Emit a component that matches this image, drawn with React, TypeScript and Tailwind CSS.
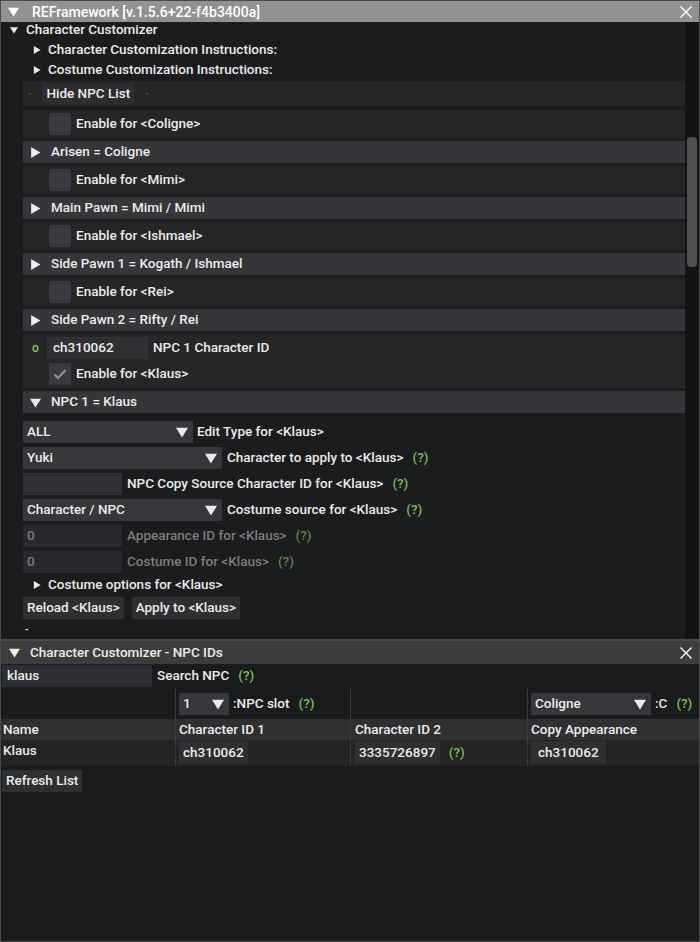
import React from "react";

// small filled triangles used by ImGui style trees / headers
const Down = ({ s = 11 }: { s?: number }) => (
  <svg width={s} height={s} viewBox="0 0 10 10" className="shrink-0">
    <path d="M0 1.5h10L5 9.5z" fill="currentColor" />
  </svg>
);

const Right = ({ s = 11 }: { s?: number }) => (
  <svg width={s} height={s} viewBox="0 0 10 10" className="shrink-0">
    <path d="M1 0v10l8.5-5z" fill="currentColor" />
  </svg>
);

const Close = () => (
  <svg width="14" height="14" viewBox="0 0 14 14" className="shrink-0">
    <path d="M1.5 1.5l11 11M12.5 1.5l-11 11" stroke="#fff" strokeWidth="1.4" />
  </svg>
);

const Help = ({ dim = false }: { dim?: boolean }) => (
  <span className={dim ? "ml-[9px] text-[#5f8447]" : "ml-[9px] text-[#7fbf4f]"}>(?)</span>
);

const Checkbox = ({ checked = false }: { checked?: boolean }) => (
  <div className="w-[22px] h-[22px] bg-[#393941] flex items-center justify-center shrink-0">
    {checked && (
      <svg width="16" height="16" viewBox="0 0 16 16">
        <path d="M2.5 8.5l3.5 3.5 7.5-8" stroke="#8d8d8f" strokeWidth="2.4" fill="none" />
      </svg>
    )}
  </div>
);

const EnableRow = ({ name }: { name: string }) => (
  <div className="h-[28px] bg-[#262626] flex items-center pl-[26px]">
    <Checkbox />
    <span className="ml-[5px]">Enable for &lt;{name}&gt;</span>
  </div>
);

const Header = ({ label, open = false }: { label: string; open?: boolean }) => (
  <div className="h-[22px] bg-[#353639] flex items-center pl-[7px]">
    {open ? <Down s={11} /> : <Right s={11} />}
    <span className="ml-[10px]">{label}</span>
  </div>
);

const Combo = ({ value, w }: { value: string; w: string }) => (
  <div className={`${w} h-[22px] bg-[#36373b] flex items-center pl-[4px] pr-[5px] shrink-0`}>
    <span>{value}</span>
    <span className="ml-auto"><Down s={12} /></span>
  </div>
);

export default function App() {
  return (
    <div className="w-[700px] h-[942px] flex flex-col bg-[#1a1b1d] text-[13.5px] font-medium leading-none text-[#ebebeb] font-['Roboto',sans-serif]">
      {/* main window */}
      <div className="h-[640px] flex flex-col border border-[#4b4b4c] bg-[#1b1c1e]">
        <div className="h-[21px] bg-[#929292] flex items-center pl-[7px] pr-[6px] text-white shrink-0">
          <Down s={11} />
          <span className="ml-[13px] text-[14px]">REFramework [v.1.5.6+22-f4b3400a]</span>
          <span className="ml-auto"><Close /></span>
        </div>

        <div className="flex flex-1 min-h-0">
          <div className="flex-1 flex flex-col">
            {/* tree */}
            <div className="h-[16px] flex items-center pl-[9px]">
              <Down s={8} />
              <span className="ml-[8px]">Character Customizer</span>
            </div>
            <div className="h-[16px] flex items-center pl-[32px] mt-[4px]">
              <Right s={8} />
              <span className="ml-[7px]">Character Customization Instructions:</span>
            </div>
            <div className="h-[16px] flex items-center pl-[32px] mt-[4px]">
              <Right s={8} />
              <span className="ml-[7px]">Costume Customization Instructions:</span>
            </div>

            <div className="ml-[22px] mt-[3px] flex flex-col gap-[3px]">
              <div className="h-[25px] bg-[#262626] flex items-center pl-[5px]">
                <span className="text-[#5a5a5a] text-[10px]">-</span>
                <div className="ml-[11px] h-[22px] bg-[#2d2d2f] flex items-center px-[4px]">Hide NPC List</div>
                <span className="ml-[11px] text-[#5a5a5a] text-[10px]">-</span>
              </div>
              <div className="mt-[1px]">
                <EnableRow name="Coligne" />
              </div>
              <Header label="Arisen = Coligne" />
              <EnableRow name="Mimi" />
              <Header label="Main Pawn = Mimi / Mimi" />
              <EnableRow name="Ishmael" />
              <Header label="Side Pawn 1 = Kogath / Ishmael" />
              <EnableRow name="Rei" />
              <Header label="Side Pawn 2 = Rifty / Rei" />
              <div className="h-[54px] bg-[#262626] flex flex-col pt-[3px] gap-[4px]">
                <div className="h-[22px] flex items-center pl-[9px]">
                  <span className="text-[#8fc454] text-[12px] w-[15px]">o</span>
                  <div className="w-[101px] h-[22px] bg-[#2f3034] flex items-center pl-[6px]">ch310062</div>
                  <span className="ml-[5px]">NPC 1 Character ID</span>
                </div>
                <div className="h-[22px] flex items-center pl-[26px]">
                  <Checkbox checked />
                  <span className="ml-[5px]">Enable for &lt;Klaus&gt;</span>
                </div>
              </div>
              <Header label="NPC 1 = Klaus" open />
            </div>

            {/* npc 1 body */}
            <div className="ml-[22px] mt-[8px] flex flex-col gap-[4px]">
              <div className="flex items-center">
                <Combo value="ALL" w="w-[170px]" />
                <span className="ml-[4px]">Edit Type for &lt;Klaus&gt;</span>
              </div>
              <div className="flex items-center">
                <Combo value="Yuki" w="w-[199px]" />
                <span className="ml-[5px]">Character to apply to &lt;Klaus&gt;</span>
                <Help />
              </div>
              <div className="flex items-center">
                <div className="w-[99px] h-[22px] bg-[#2f3034] shrink-0" />
                <span className="ml-[5px]">NPC Copy Source Character ID for &lt;Klaus&gt;</span>
                <Help />
              </div>
              <div className="flex items-center">
                <Combo value="Character / NPC" w="w-[199px]" />
                <span className="ml-[5px]">Costume source for &lt;Klaus&gt;</span>
                <Help />
              </div>
              <div className="flex items-center text-[#7d7d7d]">
                <div className="w-[99px] h-[22px] bg-[#28292c] flex items-center pl-[4px] shrink-0">0</div>
                <span className="ml-[5px]">Appearance ID for &lt;Klaus&gt;</span>
                <Help dim />
              </div>
              <div className="flex items-center text-[#7d7d7d]">
                <div className="w-[99px] h-[22px] bg-[#28292c] flex items-center pl-[4px] shrink-0">0</div>
                <span className="ml-[5px]">Costume ID for &lt;Klaus&gt;</span>
                <Help dim />
              </div>
              <div className="h-[16px] flex items-center pl-[10px]">
                <Right s={8} />
                <span className="ml-[7px]">Costume options for &lt;Klaus&gt;</span>
              </div>
              <div className="flex items-center gap-[8px]">
                <div className="h-[22px] bg-[#2e2f31] flex items-center px-[4px]">Reload &lt;Klaus&gt;</div>
                <div className="h-[22px] bg-[#2e2f31] flex items-center px-[4px]">Apply to &lt;Klaus&gt;</div>
              </div>
              <div className="pl-[2px] mt-[2px] text-[10px]">-</div>
            </div>
          </div>

          {/* scrollbar */}
          <div className="w-[14px] bg-[#121314] pt-[115px] px-[2px] shrink-0">
            <div className="h-[130px] rounded-[4px] bg-[#505051]" />
          </div>
        </div>
      </div>

      {/* npc ids window */}
      <div className="flex-1 flex flex-col border border-[#4b4b4c] bg-[#1a1b1d]">
        <div className="h-[23px] bg-[#3c3c3d] flex items-center pl-[8px] pr-[6px] shrink-0">
          <Down s={11} />
          <span className="ml-[10px]">Character Customizer - NPC IDs</span>
          <span className="ml-auto"><Close /></span>
        </div>

        <div className="flex items-center mt-[1px] pl-[1px]">
          <div className="w-[150px] h-[22px] bg-[#2d2e35] flex items-center pl-[5px]">klaus</div>
          <span className="ml-[5px]">Search NPC</span>
          <Help />
        </div>

        <div className="mt-[2px] grid grid-cols-[174px_175px_177px_1fr]">
          {/* combo row */}
          <div className="h-[30px]" />
          <div className="h-[30px] border-l border-[#3a3a3d] flex items-center pl-[3px]">
            <Combo value="1" w="w-[50px]" />
            <span className="ml-[4px]">:NPC slot</span>
            <Help />
          </div>
          <div className="h-[30px] border-l border-[#3a3a3d]" />
          <div className="h-[30px] border-l border-[#3a3a3d] flex items-center pl-[3px]">
            <Combo value="Coligne" w="w-[120px]" />
            <span className="ml-[4px]">:C</span>
            <Help />
          </div>

          {/* header row */}
          <div className="h-[21px] bg-[#2f3032] flex items-center pl-[2px]">Name</div>
          <div className="h-[21px] bg-[#2f3032] border-l border-[#3a3a3d] flex items-center pl-[3px]">Character ID 1</div>
          <div className="h-[21px] bg-[#2f3032] border-l border-[#3a3a3d] flex items-center pl-[4px]">Character ID 2</div>
          <div className="h-[21px] bg-[#2f3032] border-l border-[#3a3a3d] flex items-center pl-[3px]">Copy Appearance</div>

          {/* data row */}
          <div className="h-[26px] bg-[#242422] pl-[2px] pt-[4px]">Klaus</div>
          <div className="h-[26px] bg-[#242422] border-l border-[#3a3a3d] flex items-start pl-[3px] pt-[1px]">
            <div className="h-[23px] bg-[#2e2f31] flex items-center px-[4px]">ch310062</div>
          </div>
          <div className="h-[26px] bg-[#242422] border-l border-[#3a3a3d] flex items-start pl-[4px] pt-[1px]">
            <div className="h-[23px] bg-[#2e2f31] flex items-center px-[4px]">3335726897</div>
            <span className="h-[23px] flex items-center"><Help /></span>
          </div>
          <div className="h-[26px] bg-[#242422] border-l border-[#3a3a3d] flex items-start pl-[3px] pt-[1px]">
            <div className="h-[23px] bg-[#2e2f31] flex items-center px-[7px]">ch310062</div>
          </div>
        </div>

        <div className="mt-[4px] pl-[1px] flex">
          <div className="h-[22px] bg-[#2e2f31] flex items-center px-[4px]">Refresh List</div>
        </div>
      </div>
    </div>
  );
}
